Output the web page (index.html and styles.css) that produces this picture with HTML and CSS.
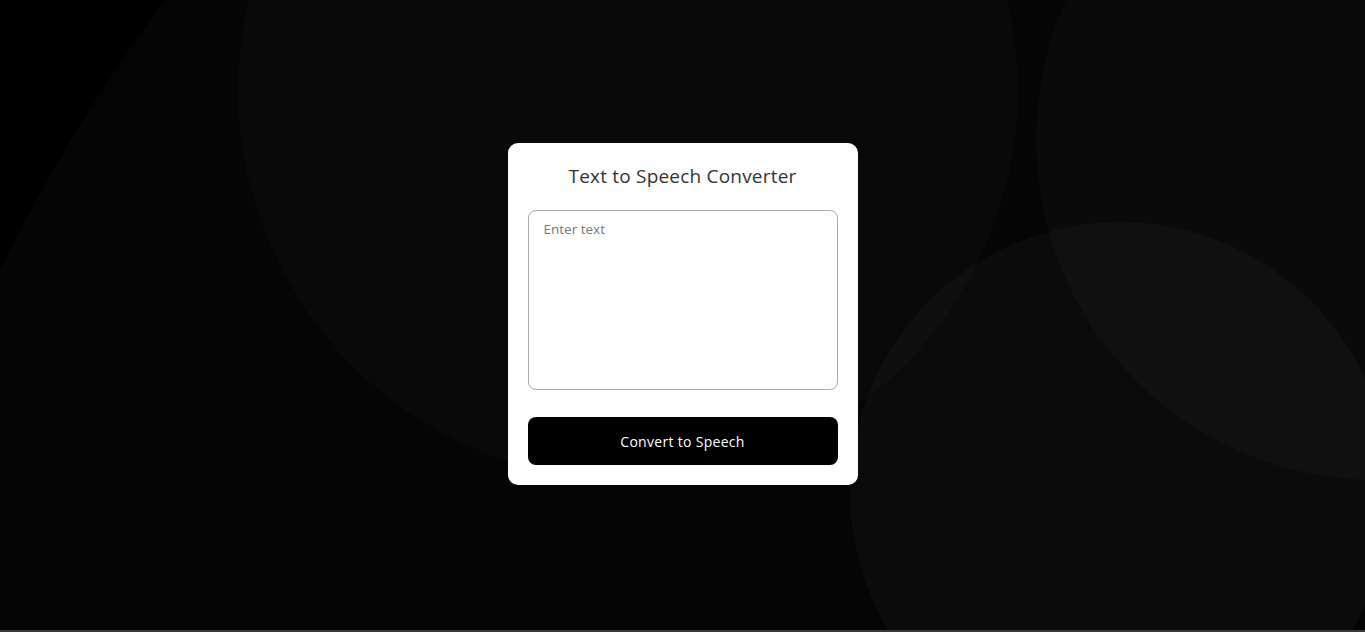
FILE: index.html
```html
<!DOCTYPE html>
<html lang="en">
<head>
<meta charset="UTF-8">
<title>Text to Speech Converter</title>
<link rel="stylesheet" href="styles.css">
</head>
<body>
<div class="bg" aria-hidden="true">
  <span class="circle c1"></span>
  <span class="circle c2"></span>
  <span class="circle c3"></span>
  <span class="circle c4"></span>
</div>
<main class="card">
  <h2 class="title">Text to Speech Converter</h2>
  <textarea class="input" placeholder="Enter text"></textarea>
  <button class="btn" type="button">Convert to Speech</button>
</main>
<div class="bottom-line"></div>
</body>
</html>
```

FILE: styles.css
```css
* { box-sizing: border-box; }

html, body {
  margin: 0;
  height: 100%;
}

body {
  background: #000;
  font-family: "Open Sans", "Liberation Sans", sans-serif;
  display: flex;
  align-items: center;
  justify-content: center;
  padding-bottom: 4px;
  overflow: hidden;
  position: relative;
}

.bg {
  position: absolute;
  inset: 0;
  overflow: hidden;
  z-index: 0;
}

.circle {
  position: absolute;
  border-radius: 50%;
  display: block;
}

.c1 {
  left: -168px;
  top: -668px;
  width: 3336px;
  height: 3336px;
  background: rgba(255, 255, 255, 0.02);
}

.c2 {
  left: 238px;
  top: -300px;
  width: 780px;
  height: 780px;
  background: rgba(255, 255, 255, 0.02);
}

.c3 {
  left: 1036px;
  top: -200px;
  width: 680px;
  height: 680px;
  background: rgba(255, 255, 255, 0.025);
}

.c4 {
  left: 850px;
  top: 222px;
  width: 540px;
  height: 540px;
  background: rgba(255, 255, 255, 0.028);
}

.bottom-line {
  position: absolute;
  left: 0;
  right: 0;
  bottom: 0;
  height: 2px;
  background: #363c3a;
}

.card {
  position: relative;
  z-index: 1;
  width: 350px;
  background: #fff;
  border-radius: 10px;
  padding: 20px;
  display: flex;
  flex-direction: column;
}

.title {
  margin: 0 0 20px;
  font-size: 19px;
  line-height: 27px;
  font-weight: 500;
  letter-spacing: 0.2px;
  color: #333;
  text-align: center;
}

.input {
  display: block;
  width: 100%;
  height: 180px;
  padding: 8px 15px;
  border: 1px solid #aaa;
  border-radius: 8px;
  font-family: inherit;
  font-size: 13.5px;
  line-height: 20px;
  color: #333;
  resize: none;
  outline: none;
}

.input::placeholder {
  color: #777;
}

.btn {
  margin-top: 27px;
  height: 48px;
  width: 100%;
  border: none;
  border-radius: 8px;
  background: #000;
  color: #fff;
  font-family: inherit;
  font-size: 14px;
  font-weight: 500;
  letter-spacing: 0.3px;
  cursor: pointer;
}
```
